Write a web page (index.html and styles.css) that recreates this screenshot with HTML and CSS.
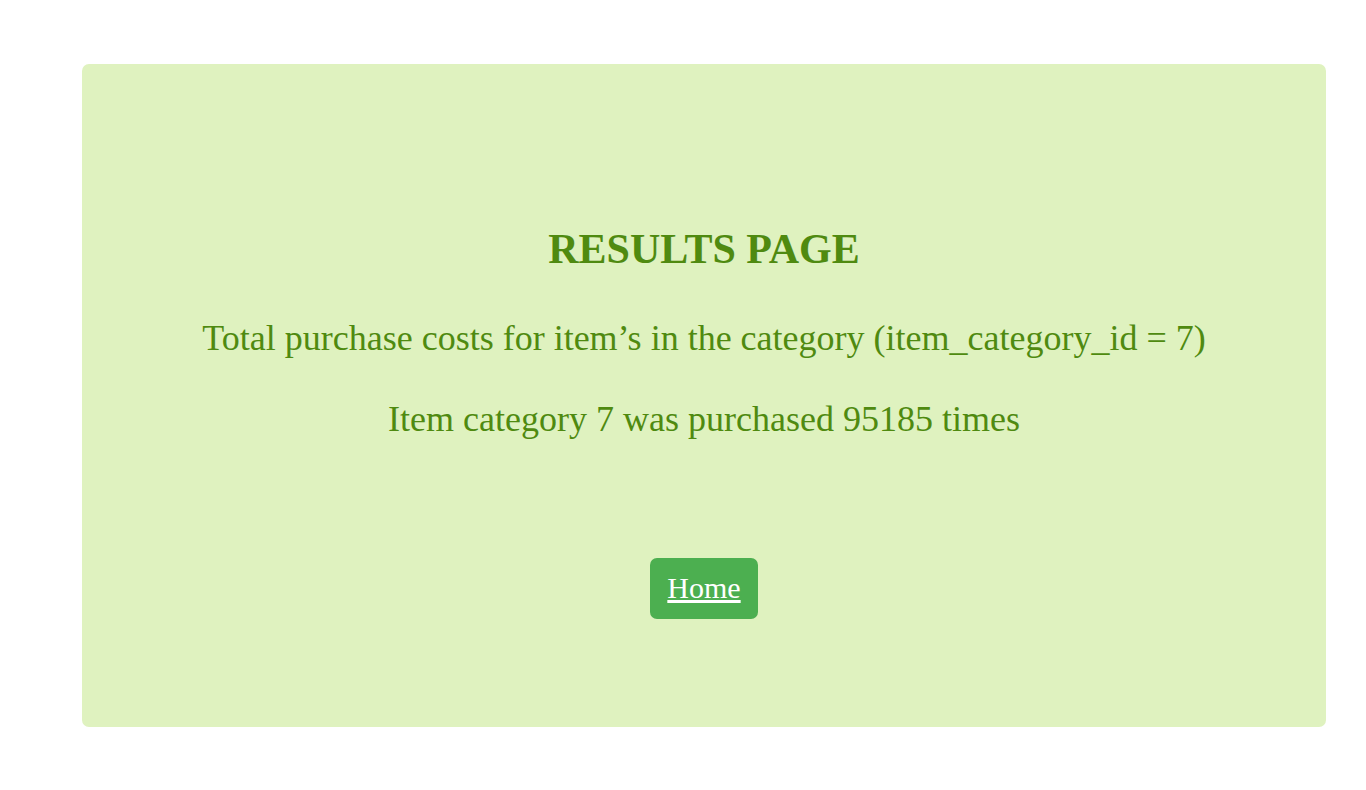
FILE: index.html
```html
<!DOCTYPE html>
<html lang="en">
<head>
<meta charset="utf-8">
<title>Results</title>
<link rel="stylesheet" href="styles.css">
</head>
<body>
<div class="panel">
  <h1 class="title">RESULTS PAGE</h1>
  <p class="line line-first">Total purchase costs for item’s in the category (item_category_id = 7)</p>
  <p class="line line-second">Item category 7 was purchased 95185 times</p>
  <a class="home-btn" href="#">Home</a>
</div>
</body>
</html>
```
FILE: styles.css
```css
html, body {
  margin: 0;
  padding: 0;
  background: #ffffff;
}
body {
  font-family: "Liberation Serif", "Times New Roman", serif;
}
.panel {
  box-sizing: border-box;
  margin: 64px 40px 0 82px;
  height: 663px;
  padding-top: 162px;
  background: #DFF2BF;
  color: #4F8A10;
  border-radius: 7px;
  display: flex;
  flex-direction: column;
  align-items: center;
  text-align: center;
}
.title {
  margin: 0;
  font-size: 42px;
  line-height: 46px;
  font-weight: bold;
}
.line {
  margin: 0;
  font-size: 36px;
  line-height: 42px;
}
.line-first {
  margin-top: 45px;
}
.line-second {
  margin-top: 39px;
}
.home-btn {
  margin-top: 118px;
  display: block;
  background: #4CAF50;
  color: #ffffff;
  text-decoration: underline;
  font-size: 30px;
  line-height: 34px;
  padding: 13px 17px 14px;
  border-radius: 7px;
}
```
